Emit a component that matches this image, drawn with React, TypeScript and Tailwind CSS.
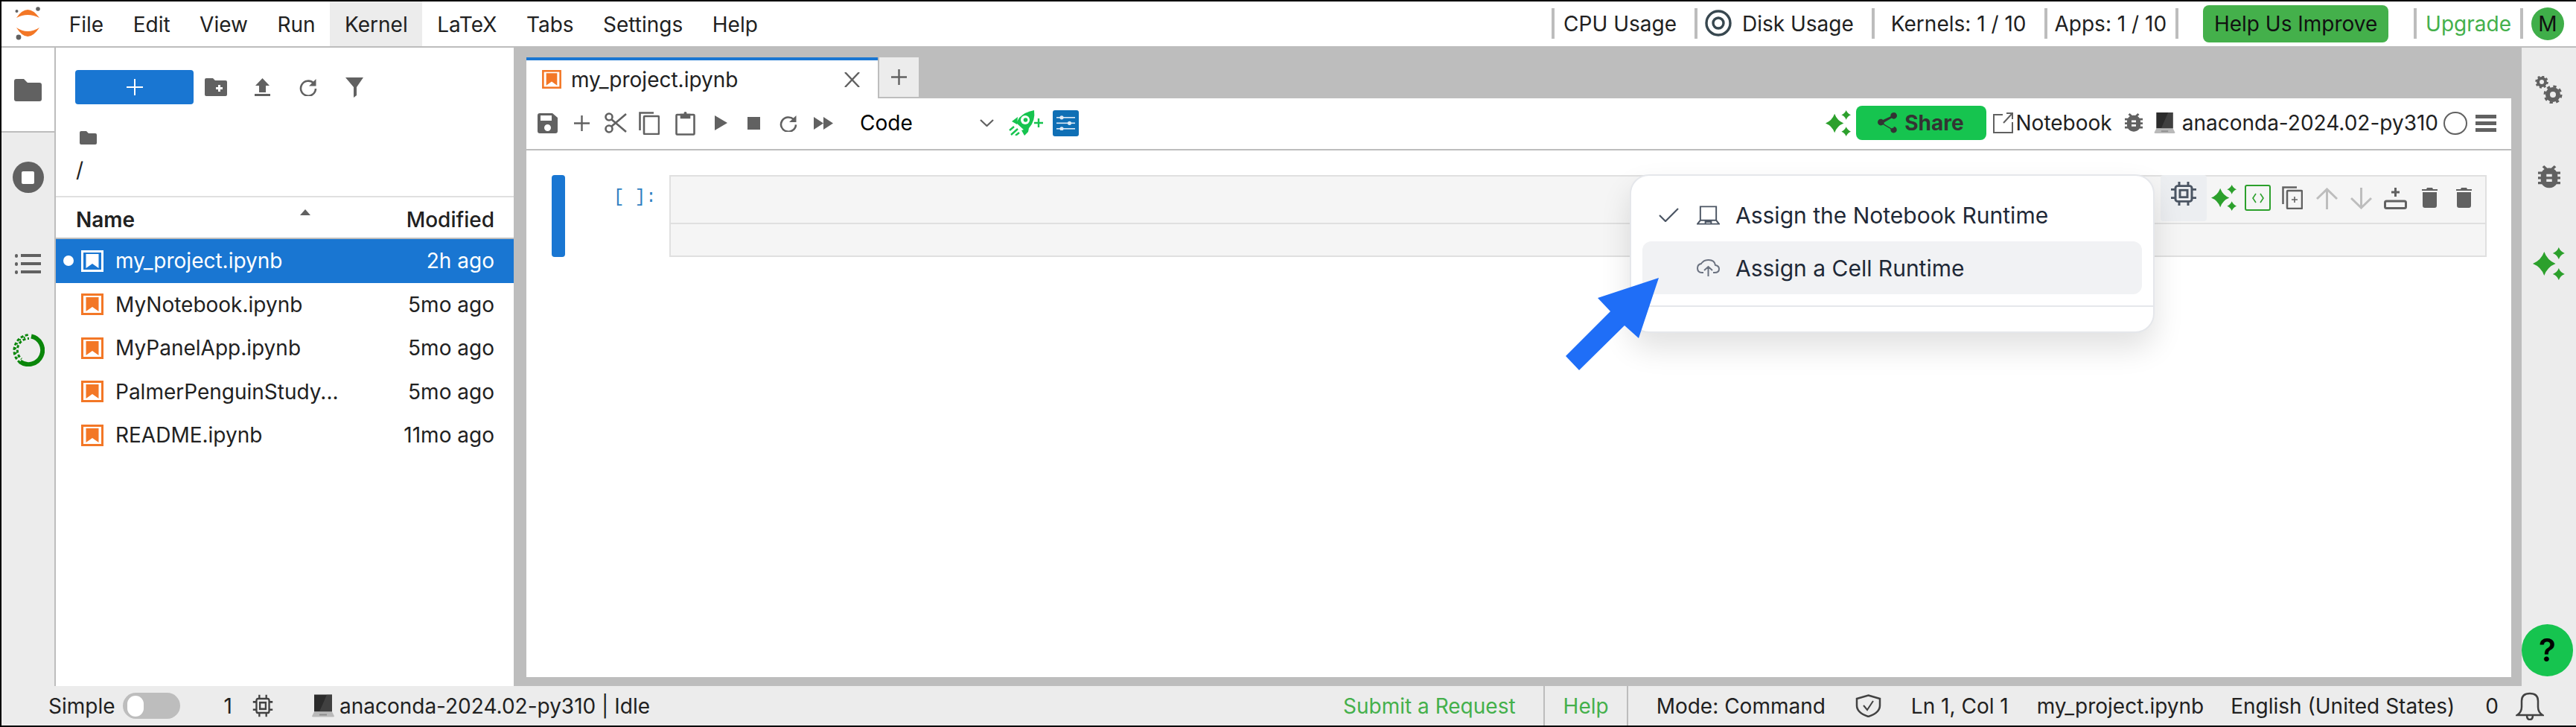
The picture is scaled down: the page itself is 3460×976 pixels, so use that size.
import type { ReactNode } from 'react'

const sans = 'font-["Inter","Noto_Sans",sans-serif]'

const SparklesIcon = ({ className }: { className: string }) => (
  <svg viewBox="0 0 36 36" preserveAspectRatio="none" className={className} fill="#2ca02c">
    <path d="M12.500 5 Q16 14.500 25 18 Q16 21.500 12.500 31 Q9 21.500 0 18 Q9 14.500 12.500 5Z" />
    <path d="M28.500 0 Q30.300 4.700 35 6.500 Q30.300 8.300 28.500 13 Q26.700 8.300 22 6.500 Q26.700 4.700 28.500 0Z" />
    <path d="M28.500 23 Q30.300 27.700 35 29.500 Q30.300 31.300 28.500 36 Q26.700 31.300 22 29.500 Q26.700 27.700 28.500 23Z" />
  </svg>
)

const NotebookIcon = ({ selected, className = 'h-[29px] w-[30px]' }: { selected?: boolean; className?: string }) => (
  <svg viewBox="0 0 30 29" className={`shrink-0 ${className}`}>
    <rect x="1.500" y="1.500" width="27" height="26" fill={selected ? '#1976d2' : '#fff'} stroke={selected ? '#fff' : '#f37726'} strokeWidth="3" />
    <path d="M6.500 5 H23.500 V24 L15 18 L6.500 24Z" fill={selected ? '#fff' : '#f37726'} />
  </svg>
)

const LaptopEmoji = ({ className }: { className: string }) => (
  <svg viewBox="0 0 30 30" className={className}>
    <path d="M3 0 H27 V23 H3Z" fill="#2b2b2b" />
    <path d="M20 0 H27 V23 H10Z" fill="#555" opacity="0.5" />
    <path d="M3 23 H27 L30 29 Q30 30 28 30 H2 Q0 30 0 29Z" fill="#b9b9b9" />
    <rect x="10" y="26" width="10" height="2" fill="#8e8e8e" />
  </svg>
)

const ChipIcon = ({ className, color = '#616161' }: { className: string; color?: string }) => (
  <svg viewBox="0 0 36 36" preserveAspectRatio="none" className={className} fill="none" stroke={color} strokeWidth="3">
    <rect x="7" y="7" width="22" height="22" rx="3" />
    <rect x="13" y="13" width="10" height="10" />
    <path d="M12 7V1M24 7V1M12 35V29M24 35V29M1 12H7M1 24H7M29 12H35M29 24H35" />
  </svg>
)

const BugIcon = ({ className }: { className: string }) => (
  <svg viewBox="4 3 16 19" preserveAspectRatio="none" className={className} fill="#616161">
    <path d="M20 8h-2.800a6 6 0 0 0-1.800-2l1.600-1.600L15.600 3l-2.200 2.200a6 6 0 0 0-2.800 0L8.400 3 7 4.400 8.600 6a6 6 0 0 0-1.800 2H4v2h2.100a6.600 6.600 0 0 0-.1 1v1H4v2h2v1c0 .3 0 .7.1 1H4v2h2.800a6 6 0 0 0 10.400 0H20v-2h-2.100c.1-.3.1-.7.1-1v-1h2v-2h-2v-1c0-.3 0-.7-.1-1H20V8zm-6 8h-4v-2h4v2zm0-4h-4v-2h4v2z" />
  </svg>
)

const RefreshIcon = ({ className }: { className: string }) => (
  <svg viewBox="0 0 24 24" preserveAspectRatio="none" className={className} fill="none" stroke="#616161" strokeWidth="2.600">
    <path d="M19 6.500A10 10 0 1 0 22 14" />
    <path d="M22.500 1v9.500h-9.500" fill="#616161" stroke="none" />
  </svg>
)

const Sep = ({ className = '' }: { className?: string }) => (
  <div className={`-mt-[1px] h-[41px] w-[4px] shrink-0 bg-[#bdbdbd] ${className}`} />
)

const Files = [
  { name: 'my_project.ipynb', time: '2h ago', selected: true },
  { name: 'MyNotebook.ipynb', time: '5mo ago' },
  { name: 'MyPanelApp.ipynb', time: '5mo ago' },
  { name: 'PalmerPenguinStudy...', time: '5mo ago' },
  { name: 'README.ipynb', time: '11mo ago' },
]

const MenuBar = () => (
  <header className="flex h-[60px] shrink-0 items-center bg-white text-[#212121]">
    <svg viewBox="0 0 36 45" className="-mt-[2px] ml-[18px] h-[45px] w-[36px] shrink-0">
      <path d="M2 15 Q17 -7 33 15 Q17 7 2 15Z" fill="#f37726" />
      <path d="M2 28 Q17 52 33 28 Q17 38 2 28Z" fill="#f37726" />
      <circle cx="31" cy="3" r="2.800" fill="#616161" />
      <circle cx="2.500" cy="6" r="2" fill="#616161" />
      <circle cx="5" cy="41" r="3.400" fill="#616161" />
    </svg>
    <nav className="ml-[17px] flex h-full">
      {['File', 'Edit', 'View', 'Run', 'Kernel', 'LaTeX', 'Tabs', 'Settings', 'Help'].map((m) => (
        <div key={m} className={`flex items-center px-[19.75px] pt-[2px] ${m === 'Kernel' ? 'bg-[#ececec]' : ''}`}>
          {m}
        </div>
      ))}
    </nav>
    <div className="ml-auto flex h-full items-center">
      <Sep />
      <span className="ml-[12px]">CPU Usage</span>
      <Sep className="ml-[24px]" />
      <svg viewBox="0 0 36 36" className="-mt-[3px] ml-[10px] h-[36px] w-[36px]" fill="none" stroke="#37474f" strokeWidth="3.400">
        <circle cx="18" cy="18" r="16" />
        <circle cx="18" cy="18" r="7" />
      </svg>
      <span className="ml-[14px]">Disk Usage</span>
      <Sep className="ml-[24px]" />
      <span className="ml-[22px]">Kernels: 1 / 10</span>
      <Sep className="ml-[24px]" />
      <span className="ml-[10px]">Apps: 1 / 10</span>
      <Sep className="ml-[12px]" />
      <div className="ml-[33px] flex h-[50px] w-[249px] items-center justify-center rounded-[8px] bg-[#44b04b] text-[#111]">
        Help Us Improve
      </div>
      <Sep className="ml-[34px]" />
      <span className="ml-[12px] text-[#44b04b]">Upgrade</span>
      <Sep className="ml-[12px]" />
      <div className="ml-[11px] mr-[16px] flex size-[44px] items-center justify-center rounded-full bg-[#3fae49] text-[#111]">
        M
      </div>
    </div>
  </header>
)

const AnacondaRing = () => (
  <svg viewBox="0 0 44 44" className="mx-auto mt-[80px] h-[44px] w-[44px]" fill="none">
    <path d="M26 3.500A19 19 0 1 1 11 37.500" stroke="#0a860a" strokeWidth="6" />
    <path d="M11 39A21 21 0 0 1 24 1.500" stroke="#0a860a" strokeWidth="3" strokeDasharray="4 2.500" />
    <path d="M13 34A15.500 15.500 0 0 1 23 6.500" stroke="#0a860a" strokeWidth="3" strokeDasharray="4 2.500" strokeDashoffset="3" />
    <path d="M8 32A18 18 0 0 1 18 4.500" stroke="#0a860a" strokeWidth="2" strokeDasharray="2 4.500" strokeDashoffset="1" />
  </svg>
)

const LeftRail = () => (
  <aside className="flex w-[71px] shrink-0 flex-col bg-[#ececec]">
    <div className="flex h-[114px] items-center justify-center border-b-2 border-[#bdbdbd] bg-white">
      <svg viewBox="0 0 37 30" className="mt-[2px] h-[30px] w-[37px]" fill="#616161">
        <path d="M3 0H13L18 5H34Q37 5 37 8V27Q37 30 34 30H3Q0 30 0 27V3Q0 0 3 0Z" />
      </svg>
    </div>
    <div className="mt-[39px] flex justify-center">
      <div className="flex size-[42px] items-center justify-center rounded-full bg-[#616161]">
        <div className="size-[17px] rounded-[2px] bg-white" />
      </div>
    </div>
    <svg viewBox="0 0 35 28" className="mx-auto mt-[81px] h-[28px] w-[35px]" fill="#616161">
      <rect x="0" y="1" width="4" height="5" rx="2" />
      <rect x="8" y="1" width="27" height="4" />
      <rect x="0" y="12" width="4" height="5" rx="2" />
      <rect x="8" y="12" width="27" height="4" />
      <rect x="0" y="23" width="4" height="5" rx="2" />
      <rect x="8" y="23" width="27" height="4" />
    </svg>
    <AnacondaRing />
  </aside>
)

const FilePanel = () => (
  <section className="flex w-[617px] shrink-0 flex-col border-l-2 border-[#bdbdbd] bg-white text-[#212121]">
    <div className="ml-[26px] mt-[30px] flex items-center">
      <div className="flex h-[46px] w-[159px] items-center justify-center rounded-[4px] bg-[#1976d2]">
        <svg viewBox="0 0 22 22" className="h-[22px] w-[22px]" stroke="#fff" strokeWidth="2">
          <path d="M11 0V22M0 11H22" />
        </svg>
      </div>
      <svg viewBox="0 0 30 24" className="ml-[15px] h-[24px] w-[30px]" fill="#616161">
        <path d="M2 0H11L14 3H28Q30 3 30 5V22Q30 24 28 24H2Q0 24 0 22V2Q0 0 2 0ZM18 9V12H15V15H18V18H21V15H24V12H21V9Z" fillRule="evenodd" />
      </svg>
      <svg viewBox="0 0 21 24" className="ml-[37px] h-[24px] w-[21px]" fill="#616161">
        <path d="M10.500 0L20 10H15V19H6V10H1ZM0 21H21V24H0Z" />
      </svg>
      <RefreshIcon className="ml-[39px] h-[24px] w-[24px]" />
      <svg viewBox="0 0 24 27" className="ml-[38px] h-[27px] w-[24px]" fill="#616161">
        <path d="M0 0H24L15 13V24L11 27V13Z" />
      </svg>
    </div>
    <svg viewBox="0 0 23 18" className="ml-[32px] mt-[36px] h-[18px] w-[23px]" fill="#616161">
      <path d="M2 0H9L12 3H21Q23 3 23 5V16Q23 18 21 18H2Q0 18 0 16V2Q0 0 2 0Z" />
    </svg>
    <div className="ml-[27px] mt-[19px] leading-[30px]">/</div>
    <div className="mt-[20px] flex h-[58px] shrink-0 items-center border-t-2 border-b-2 border-t-[#e0e0e0] border-b-[#bdbdbd] pl-[27px] pr-[26px] pt-[6px]">
      <span className="font-semibold">Name</span>
      <svg viewBox="0 0 14 8" className="ml-auto mb-[20px] h-[8px] w-[14px]" fill="#616161">
        <path d="M7 0L14 8H0Z" />
      </svg>
      <span className="ml-[129px] font-medium">Modified</span>
    </div>
    {Files.map((f) => (
      <div
        key={f.name}
        className={`flex h-[58.5px] shrink-0 items-center pr-[26px] ${f.selected ? 'bg-[#1976d2] text-white' : ''}`}
      >
        <div className={`ml-[10px] size-[14px] rounded-full ${f.selected ? 'bg-white' : ''}`} />
        <div className="ml-[10px]">
          <NotebookIcon selected={f.selected} />
        </div>
        <span className="ml-[16px]">{f.name}</span>
        <span className="ml-auto">{f.time}</span>
      </div>
    ))}
  </section>
)

const CellTools = () => (
  <div className="ml-auto flex h-full items-start">
    <div className="-mt-[2px] flex h-[62px] w-[62px] items-start justify-center rounded-[4px] bg-[#eceef1] pt-[8px]">
      <ChipIcon className="h-[34px] w-[36px]" color="#4b5563" />
    </div>
    <SparklesIcon className="ml-[6px] mt-[11px] h-[35px] w-[35px]" />
    <div className="ml-[10px] mt-[11px] flex h-[35px] w-[35px] items-center justify-center rounded-[3px] border-2 border-[#2ca02c]">
      <svg viewBox="0 0 16 14" className="h-[14px] w-[16px]" fill="none" stroke="#2ca02c" strokeWidth="1.600">
        <path d="M5 1L1 7L5 13M11 1L15 7L11 13" />
      </svg>
    </div>
    <svg viewBox="0 0 28 31" className="ml-[15px] mt-[13px] h-[31px] w-[28px]" fill="none" stroke="#616161" strokeWidth="2.500">
      <path d="M1.500 24V1.500H20" />
      <rect x="7" y="6" width="20" height="24" rx="1" />
      <path d="M17 14V22M13 18H21" strokeWidth="1.600" />
    </svg>
    <svg viewBox="0 0 29 29" className="ml-[18px] mt-[15px] h-[29px] w-[29px]" fill="none" stroke="#bdbdbd" strokeWidth="3">
      <path d="M14.500 29V2M1 15L14.500 2L28 15" />
    </svg>
    <svg viewBox="0 0 29 29" className="ml-[17px] mt-[15px] h-[29px] w-[29px]" fill="none" stroke="#bdbdbd" strokeWidth="3">
      <path d="M14.500 0V27M1 14L14.500 27L28 14" />
    </svg>
    <svg viewBox="0 0 31 29" className="ml-[16px] mt-[15px] h-[29px] w-[31px]" fill="none" stroke="#616161" strokeWidth="3">
      <path d="M15.500 0V12M10 6H21" />
      <rect x="1.500" y="18" width="28" height="9.500" rx="2" />
    </svg>
    <svg viewBox="0 0 21 27" className="ml-[20px] mt-[15px] h-[27px] w-[21px]" fill="#616161">
      <path d="M0 2H6L7 0H14L15 2H21V4H0ZM1 6H20V24Q20 27 17 27H4Q1 27 1 24Z" />
    </svg>
    <svg viewBox="0 0 21 27" className="ml-[25px] mr-[18px] mt-[15px] h-[27px] w-[21px]" fill="#616161">
      <path d="M0 2H6L7 0H14L15 2H21V4H0ZM1 6H20V24Q20 27 17 27H4Q1 27 1 24Z" />
    </svg>
  </div>
)

const RocketIcon = () => (
  <svg viewBox="0 0 46 34" className="ml-[20px] h-[34px] w-[46px]" fill="#16c44f">
    <path d="M34 0 Q36 14 27 24 L22 28 L10 17 L14 10 Q22 2 34 0Z" />
    <circle cx="22" cy="13" r="6" fill="#fff" />
    <circle cx="22.500" cy="13" r="2.800" />
    <path d="M12 9L4 15L11 19ZM27 24L26 29L21 34L17 27Z" />
    <path d="M1 27L7 22M3 33L12 25M9 34L14 30" stroke="#16c44f" strokeWidth="2.400" fill="none" />
    <path d="M40 11V23M34 17H46" stroke="#16c44f" strokeWidth="2.400" fill="none" />
  </svg>
)

const NotebookPanel = () => (
  <section className="relative flex min-w-0 flex-1 flex-col bg-[#bdbdbd] pb-[12px] pl-[17px] pr-[14px]">
    <div className="flex h-[68px] shrink-0 items-end">
      <div className="flex h-[55px] w-[472px] items-center border-t-4 border-[#1976d2] bg-white pl-[21px] pr-[24px] text-[#212121]">
        <NotebookIcon className="h-[25px] w-[26px]" />
        <span className="ml-[13px]">my_project.ipynb</span>
        <svg viewBox="0 0 21 20" className="ml-auto h-[20px] w-[21px]" stroke="#616161" strokeWidth="2.400">
          <path d="M1 0L20 20M20 0L1 20" />
        </svg>
      </div>
      <div className="mb-[2px] ml-[2px] flex h-[53px] w-[53px] items-center justify-center bg-[#ececec]">
        <svg viewBox="0 0 21 21" className="h-[21px] w-[21px]" stroke="#616161" strokeWidth="2.400">
          <path d="M10.500 0V21M0 10.500H21" />
        </svg>
      </div>
    </div>
    <div className="flex flex-1 flex-col bg-white text-[#212121]">
      <div className="flex h-[70px] shrink-0 items-center border-b-2 border-[#bdbdbd] pb-[2px]">
        <svg viewBox="0 0 27 27" className="ml-[15px] h-[27px] w-[27px]" fill="#616161">
          <path d="M3 0H20L27 6V24Q27 27 24 27H3Q0 27 0 24V3Q0 0 3 0ZM4 3V10H19V3ZM13.500 15A4.500 4.500 0 1 0 13.500 24A4.500 4.500 0 1 0 13.500 15Z" fillRule="evenodd" />
        </svg>
        <svg viewBox="0 0 21 21" className="ml-[22px] h-[21px] w-[21px]" stroke="#616161" strokeWidth="2.400">
          <path d="M10.500 0V21M0 10.500H21" />
        </svg>
        <svg viewBox="0 0 30 28" className="ml-[20px] h-[28px] w-[30px]" fill="none" stroke="#616161" strokeWidth="2.600">
          <circle cx="6" cy="6" r="4.500" />
          <circle cx="6" cy="22" r="4.500" />
          <path d="M9 9L29 26M9 19L29 2" />
        </svg>
        <svg viewBox="0 0 28 31" className="ml-[16px] h-[31px] w-[28px]" fill="none" stroke="#616161" strokeWidth="2.600">
          <path d="M1.500 25V1.500H20" />
          <rect x="7" y="6" width="20" height="24" rx="1" />
        </svg>
        <svg viewBox="0 0 27 33" className="ml-[21px] h-[33px] w-[27px]" fill="none" stroke="#616161" strokeWidth="2.600">
          <rect x="1.500" y="5" width="24" height="26.500" rx="1" />
          <path d="M8 5H19V9H8Z" fill="#616161" />
          <circle cx="13.500" cy="3" r="2" fill="#616161" stroke="none" />
        </svg>
        <svg viewBox="0 0 17 20" className="ml-[26px] h-[20px] w-[17px]" fill="#616161">
          <path d="M0 0L17 10L0 20Z" />
        </svg>
        <div className="ml-[27px] size-[17px] bg-[#616161]" />
        <RefreshIcon className="ml-[26px] h-[23px] w-[24px]" />
        <svg viewBox="0 0 26 17" className="ml-[22px] h-[17px] w-[26px]" fill="#616161">
          <path d="M0 0L13 8.500L0 17ZM13 0L26 8.500L13 17Z" />
        </svg>
        <span className="ml-[36px] w-[161px] text-black">Code</span>
        <svg viewBox="0 0 19 10" className="h-[10px] w-[19px]" fill="none" stroke="#616161" strokeWidth="2.200">
          <path d="M1 1L9.500 9L18 1" />
        </svg>
        <RocketIcon />
        <div className="ml-[13px] flex h-[35px] w-[35px] items-center justify-center rounded-[3px] bg-[#0f6fb5]">
          <svg viewBox="0 0 25 20" className="h-[20px] w-[25px]" fill="#dfeaf5">
            <rect y="2" width="25" height="1.600" />
            <rect y="9.500" width="25" height="1.600" />
            <rect y="17" width="25" height="1.600" />
            <circle cx="7" cy="2.800" r="2.600" />
            <circle cx="17.500" cy="10.300" r="2.600" />
            <circle cx="7" cy="17.800" r="2.600" />
          </svg>
        </div>
        <SparklesIcon className="ml-auto h-[35px] w-[35px]" />
        <div className="ml-[6px] flex h-[46px] w-[175px] items-center justify-center rounded-[8px] bg-[#16c44f] font-bold text-[#333]">
          <svg viewBox="3 2 18 20" className="mr-[10px] h-[29px] w-[26px]" fill="#333" preserveAspectRatio="none">
            <path d="M18 16.100c-.8 0-1.400.3-2 .8l-7.100-4.200c.1-.2.1-.5.1-.7s0-.5-.1-.7L16 7.200c.5.5 1.200.8 2 .8 1.700 0 3-1.300 3-3s-1.300-3-3-3-3 1.300-3 3c0 .2 0 .5.100.7L8 8.900C7.500 8.400 6.800 8 6 8c-1.700 0-3 1.300-3 3s1.300 3 3 3c.8 0 1.500-.3 2-.8l7.100 4.200c-.100.200-.100.400-.100.600 0 1.600 1.300 2.900 2.900 2.900s2.900-1.300 2.900-2.900-1.200-2.900-2.800-2.900z" />
          </svg>
          Share
        </div>
        <svg viewBox="0 0 27 28" className="ml-[9px] h-[28px] w-[27px]" fill="none" stroke="#616161" strokeWidth="2">
          <path d="M13 3H1V27H26V13M14 14L26 1M18 1H26V9" />
        </svg>
        <span className="ml-[4px]">Notebook</span>
        <BugIcon className="ml-[17px] h-[26px] w-[24px]" />
        <LaptopEmoji className="ml-[15px] h-[28px] w-[29px]" />
        <span className="ml-[9px]">anaconda-2024.02-py310</span>
        <div className="ml-[7px] h-[31px] w-[32px] rounded-full border-2 border-[#616161]" />
        <svg viewBox="0 0 28 23" className="ml-[11px] mr-[20px] h-[23px] w-[28px]" fill="#616161">
          <path d="M0 0H28V5H0ZM0 9H28V14H0ZM0 18H28V23H0Z" />
        </svg>
      </div>
      <div className="flex flex-1 items-start pl-[34px] pr-[33px] pt-[33px]">
        <div className="h-[110px] w-[18px] shrink-0 rounded-[4px] bg-[#1976d2]" />
        <div className="ml-[65px] mt-[15px] w-[75px] shrink-0 whitespace-pre font-['Liberation_Mono',monospace] text-[24px] leading-[30px] text-[#307fc1]">
          [ ]:
        </div>
        <div className="flex h-[110px] flex-1 flex-col border-2 border-[#e0e0e0] bg-[#f5f5f5]">
          <div className="flex h-[64px] shrink-0 border-b-2 border-[#e0e0e0]">
            <CellTools />
          </div>
        </div>
      </div>
    </div>
  </section>
)

const GearsIcon = () => (
  <svg viewBox="0 0 37 37" className="mt-[38px] h-[37px] w-[37px]" fill="none" stroke="#616161">
    <circle cx="9" cy="8" r="5" strokeWidth="4" />
    <circle cx="9" cy="8" r="7.500" strokeWidth="2.500" strokeDasharray="2.950 2.950" />
    <circle cx="24" cy="25" r="7" strokeWidth="6" />
    <circle cx="24" cy="25" r="11" strokeWidth="3" strokeDasharray="4.300 4.340" />
  </svg>
)

const RightRail = () => (
  <aside className="flex w-[73px] shrink-0 flex-col items-center bg-[#ececec]">
    <GearsIcon />
    <BugIcon className="mt-[83px] h-[32px] w-[30px]" />
    <SparklesIcon className="mt-[78px] h-[44px] w-[44px]" />
  </aside>
)

const StatusBar = () => (
  <footer className="flex h-[53px] shrink-0 items-center bg-[#ececec] text-[#212121]">
    <span className="ml-[63px]">Simple</span>
    <div className="ml-[10px] flex h-[35px] w-[77px] items-center rounded-full bg-[#bdbdbd] pl-[6px]">
      <div className="h-[28px] w-[22px] rounded-full bg-white" />
    </div>
    <span className="ml-[59px]">1</span>
    <ChipIcon className="ml-[27px] h-[31px] w-[28px]" color="#424242" />
    <LaptopEmoji className="ml-[52px] h-[31px] w-[30px]" />
    <span className="ml-[7px]">anaconda-2024.02-py310 | Idle</span>
    <span className="ml-auto text-[#44b04b]">Submit a Request</span>
    <div className="ml-[37px] h-full w-[2px] bg-[#bdbdbd]" />
    <span className="ml-[25px] text-[#44b04b]">Help</span>
    <div className="ml-[24px] h-full w-[2px] bg-[#bdbdbd]" />
    <span className="ml-[38px]">Mode: Command</span>
    <svg viewBox="0 0 35 31" preserveAspectRatio="none" className="ml-[40px] h-[31px] w-[35px]" fill="none" stroke="#424242" strokeWidth="2.500">
      <path d="M17.500 1.500L33 6V15Q33 25 17.500 30Q2 25 2 15V6Z" />
      <path d="M11 15L16 21L24 9" strokeWidth="2" />
    </svg>
    <span className="ml-[40px]">Ln 1, Col 1</span>
    <span className="ml-[38px]">my_project.ipynb</span>
    <span className="ml-[36px]">English (United States)</span>
    <span className="ml-[41px]">0</span>
    <svg viewBox="0 0 38 38" preserveAspectRatio="none" className="ml-[23px] mr-[43px] h-[38px] w-[38px]" fill="none" stroke="#424242" strokeWidth="2.500">
      <path d="M2 31Q8 27 8 20V12Q8 2 19 2Q30 2 30 12V20Q30 27 36 31ZM15 31Q15 37 19 37Q23 37 23 31" />
    </svg>
  </footer>
)

const MenuRow = ({
  icon,
  check,
  hover,
  children,
}: {
  icon: ReactNode
  check?: boolean
  hover?: boolean
  children: ReactNode
}) => (
  <div className={`mx-[15px] flex h-[71px] items-center rounded-[12px] ${hover ? 'bg-[#f1f2f4]' : ''}`}>
    <div className="ml-[22px] w-[27px]">
      {check && (
        <svg viewBox="0 0 27 19" className="h-[19px] w-[27px]" fill="none" stroke="#4b5563" strokeWidth="2.200">
          <path d="M1 10L9 18L26 1" />
        </svg>
      )}
    </div>
    <div className="ml-[24px]">{icon}</div>
    <span className="ml-[21px]">{children}</span>
  </div>
)

const RuntimeMenu = () => (
  <div className="absolute left-[2189px] top-[234px] z-10 h-[213px] w-[705px] rounded-[26px] border-2 border-[#e5e7eb] bg-white pt-[17px] text-[30px] text-[#1f2937] shadow-[0_20px_40px_rgba(0,0,0,0.12)]">
    <MenuRow
      icon={
        <svg viewBox="0 0 32 26" className="h-[26px] w-[31px]" fill="none" stroke="#4b5563" strokeWidth="2">
          <path d="M5 20V1H27V20M1 25H31L27 20H5ZM12 25V22H20V25" />
        </svg>
      }
      check
    >
      Assign the Notebook Runtime
    </MenuRow>
    <MenuRow
      icon={
        <svg viewBox="0 0 31 24" className="h-[24px] w-[31px]" fill="none" stroke="#6b7280" strokeWidth="2">
          <path d="M9 18H7Q1 18 1 12Q1 7 6 6Q9 1 16 1Q24 1 25 8Q30 9 30 13Q30 18 24 18H22M15.500 23V10M10 15L15.500 10L21 15" />
        </svg>
      }
      hover
    >
      Assign a Cell Runtime
    </MenuRow>
    <div className="mt-[15px] h-[2px] bg-[#e5e7eb]" />
  </div>
)

export default function App() {
  return (
    <div className={`relative flex h-[976px] w-[3460px] flex-col overflow-hidden bg-black py-[2px] pl-[2px] text-[28px] leading-[32px] ${sans}`}>
      <MenuBar />
      <div className="flex min-h-0 flex-1 border-t-2 border-[#bdbdbd]">
        <LeftRail />
        <FilePanel />
        <NotebookPanel />
        <RightRail />
      </div>
      <StatusBar />
      <RuntimeMenu />
      <svg viewBox="0 0 130 130" className="absolute left-[2100px] top-[370px] z-20 h-[130px] w-[130px]" fill="#1f6ef7">
        <path d="M128 3L46 30L63 48L3 108L21 127L82 67L101 84Z" />
      </svg>
      <div className="absolute left-[3387px] top-[838px] z-10 flex h-[70px] w-[69px] items-center justify-center rounded-full bg-[#16c44f] text-[42px] font-semibold text-black">
        ?
      </div>
    </div>
  )
}
